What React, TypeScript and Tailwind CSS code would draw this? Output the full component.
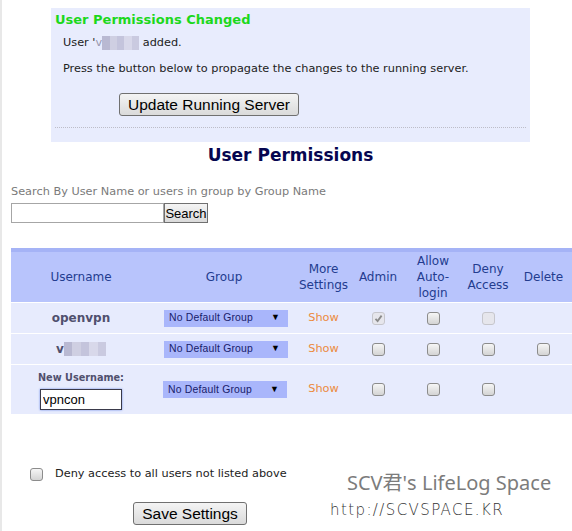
import React from 'react';

// column template shared by header and rows
const cols = 'grid grid-cols-[140px_146px_53px_56px_54px_56px_55px]';

const Check: React.FC<{ checked?: boolean; disabled?: boolean }> = ({ checked, disabled }) => (
  <span
    className={`inline-flex items-center justify-center w-[13px] h-[13px] rounded-[3px] border ${
      disabled
        ? 'border-[#c6c6cc] bg-[#e6e6ec]'
        : 'border-[#8c8c8c] bg-linear-to-b from-[#f6f6f6] to-[#d4d4d4]'
    }`}
  >
    {checked && (
      <svg width="9" height="9" viewBox="0 0 9 9">
        <path d="M1.5 4.8 L3.6 7 L7.6 1.6" fill="none" stroke="#8a8a8a" strokeWidth="1.8" />
      </svg>
    )}
  </span>
);

const GroupSelect: React.FC = () => (
  <div className="w-[124px] h-[17px] bg-[#a9b6fb] flex items-center justify-between pl-[5px] pr-[8px] font-['Liberation_Sans',Arial,sans-serif] text-[10.4px] tracking-[0.2px] text-[#18206a]">
    <span>No Default Group</span>
    <span className="text-[9px] text-black">▼</span>
  </div>
);

const Blur: React.FC<{ w: number }> = ({ w }) => (
  <span className="inline-flex h-[14px] align-middle blur-[0.6px]" style={{ width: w }}>
    <span className="flex-1 bg-[#b9b9d2]" />
    <span className="flex-1 bg-[#cfcfe2]" />
    <span className="flex-1 bg-[#c4c4dc]" />
    <span className="flex-1 bg-[#d8d8ea]" />
    <span className="flex-1 bg-[#cacae0]" />
  </span>
);

const UserRow: React.FC<{
  name: React.ReactNode;
  flags: { admin?: boolean; adminDisabled?: boolean; denyDisabled?: boolean; del?: boolean };
}> = ({ name, flags }) => (
  <div className={`${cols} h-[30px] mt-px bg-[#e7ebfd] items-center`}>
    <div className="text-center font-bold text-[12px] text-[#50506e]">{name}</div>
    <div className="pl-[13px]">
      <GroupSelect />
    </div>
    <div className="text-center text-[11.3px] text-[#ec8a3c]">Show</div>
    <div className="flex justify-center">
      <Check checked={flags.admin} disabled={flags.adminDisabled} />
    </div>
    <div className="flex justify-center">
      <Check />
    </div>
    <div className="flex justify-center">
      <Check disabled={flags.denyDisabled} />
    </div>
    <div className="flex justify-center">{flags.del && <Check />}</div>
  </div>
);

const btn =
  "border border-[#707070] rounded-[3px] bg-linear-to-b from-[#f4f4f4] to-[#dadada] font-['Liberation_Sans',Arial,sans-serif] text-black";

export default function App() {
  return (
    <div className="relative w-[572px] h-[531px] overflow-hidden bg-white font-['DejaVu_Sans',sans-serif] text-[#222]">
      <div className="absolute left-0 top-0 w-[2px] h-full bg-[#e8e8e8]" />

      {/* change notice */}
      <div className="ml-[51px] pt-[8px]">
        <div className="w-[479px] h-[134px] bg-[#e8ecfd] pt-[4px] px-[4px]">
          <div className="font-bold text-[13px] leading-[16px] text-[#1cd81c]">User Permissions Changed</div>
          <div className="mt-[7px] pl-[8px] text-[11.3px] leading-[16px]">
            User '<span className="text-[#9a9ab0]">v</span>
            <Blur w={37} /> added.
          </div>
          <div className="mt-[10px] pl-[8px] text-[11.3px] leading-[16px]">
            Press the button below to propagate the changes to the running server.
          </div>
          <button className={`${btn} mt-[16px] ml-[64px] h-[23px] px-[8px] text-[15.5px] leading-none`}>
            Update Running Server
          </button>
          <div className="mt-[10px] border-t border-dotted border-[#bdbdc8]" />
        </div>
        <div className="w-[479px] h-[26px] leading-[26px] text-center font-bold text-[17px] text-[#060650]">
          User Permissions
        </div>
      </div>

      {/* search */}
      <div className="mt-[17px] ml-[11px] text-[11.3px] leading-[14px] text-[#7a7a7a]">
        Search By User Name or users in group by Group Name
      </div>
      <div className="mt-[4px] ml-[11px] flex h-[20px]">
        <input className="w-[153px] h-[20px] border border-[#a6a6a6] bg-white outline-none" />
        <button className={`${btn} w-[44px] h-[20px] text-[13px] rounded-none border-[#8a8a8a]`}>Search</button>
      </div>

      {/* users table */}
      <div className="mt-[25px] ml-[11px] w-[561px]">
        <div className="h-[4px] bg-[#a5b3f6]" />
        <div className={`${cols} h-[50px] bg-[#b8c4fc] items-center text-center text-[12px] leading-[16px] text-[#233c8f]`}>
          <div>Username</div>
          <div>Group</div>
          <div>
            More
            <br />
            Settings
          </div>
          <div>Admin</div>
          <div>
            Allow
            <br />
            Auto-
            <br />
            login
          </div>
          <div>
            Deny
            <br />
            Access
          </div>
          <div>Delete</div>
        </div>

        <UserRow name="openvpn" flags={{ admin: true, adminDisabled: true, denyDisabled: true }} />
        <UserRow
          name={
            <span className="inline-flex items-center">
              v<Blur w={42} />
            </span>
          }
          flags={{ del: true }}
        />

        <div className={`${cols} h-[49px] mt-px bg-[#e7ebfd] items-center`}>
          <div className="flex flex-col items-center pt-[2px]">
            <div className="font-bold text-[9.7px] leading-[12px] text-[#50506e]">New Username:</div>
            <input
              defaultValue="vpncon"
              className="mt-[5px] w-[82px] h-[21px] border border-[#3a3a4a] shadow-[0_0_2px_#6a8ae8] bg-white px-[2px] font-['Liberation_Sans',Arial,sans-serif] text-[13px] text-black outline-none"
            />
          </div>
          <div className="pl-[12px]">
            <GroupSelect />
          </div>
          <div className="text-center text-[11.3px] text-[#ec8a3c]">Show</div>
          <div className="flex justify-center">
            <Check />
          </div>
          <div className="flex justify-center">
            <Check />
          </div>
          <div className="flex justify-center">
            <Check />
          </div>
          <div />
        </div>
      </div>

      {/* footer */}
      <div className="mt-[52px] ml-[30px] flex items-center h-[16px]">
        <Check />
        <span className="ml-[12px] text-[11.3px]">Deny access to all users not listed above</span>
      </div>
      <button className={`${btn} mt-[20px] ml-[133px] w-[114px] h-[23px] text-[15.5px] leading-none`}>
        Save Settings
      </button>

      {/* blog watermark */}
      <div className="absolute left-[347px] top-[469px] font-['Noto_Sans','Noto_Sans_CJK_KR',sans-serif] text-[20px] leading-[28px] text-[#7c7c7c]">
        SCV君's LifeLog Space
      </div>
      <div className="absolute left-[330px] top-[500px] font-['DejaVu_Sans',sans-serif] font-light text-[15px] leading-[20px] tracking-[1.4px] text-[#333]">
        http://SCVSPACE.KR
      </div>
    </div>
  );
}
